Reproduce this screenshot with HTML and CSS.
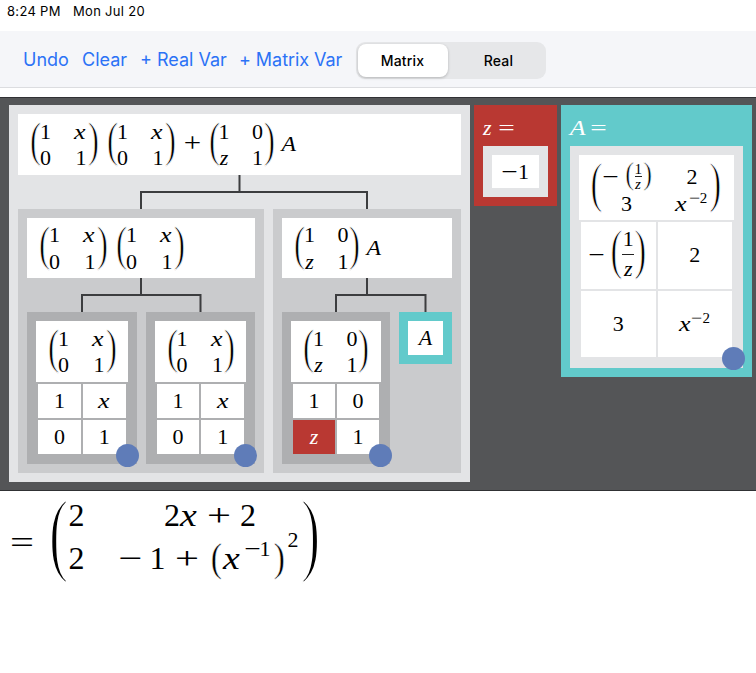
FILE: index.html
```html
<!DOCTYPE html>
<html lang="en">
<head>
<meta charset="utf-8">
<title>Matrix Calculator</title>
<link rel="stylesheet" href="styles.css">
</head>
<body>
<header class="status"><span class="time">8:24 PM</span><span class="date">Mon Jul 20</span></header>
<nav class="toolbar">
  <a class="undo">Undo</a><a class="clear">Clear</a><a class="real">+ Real Var</a><a class="matrix">+ Matrix Var</a>
  <div class="segment"><span class="seg on">Matrix</span><span class="seg">Real</span></div>
</nav>
<main class="canvas">
  <section class="node root">
    <div class="formula">
      <span class="mx"><b class="p">(</b><span class="grid"><i>1</i><i class="v">x</i><i>0</i><i>1</i></span><b class="p">)</b></span>
      <span class="mx next"><b class="p">(</b><span class="grid"><i>1</i><i class="v">x</i><i>0</i><i>1</i></span><b class="p">)</b></span>
      <b class="op plus">+</b>
      <span class="mx"><b class="p">(</b><span class="grid narrow"><i>1</i><i>0</i><i class="v z">z</i><i>1</i></span><b class="p">)</b></span>
      <i class="v cap">A</i>
    </div>
    <svg class="wire" width="443" height="34"><path d="M221.5 0V17M123 34V17H349V34"/></svg>
    <div class="children">
      <section class="node mid left">
        <div class="formula">
          <span class="mx"><b class="p">(</b><span class="grid"><i>1</i><i class="v">x</i><i>0</i><i>1</i></span><b class="p">)</b></span>
          <span class="mx next"><b class="p">(</b><span class="grid"><i>1</i><i class="v">x</i><i>0</i><i>1</i></span><b class="p">)</b></span>
        </div>
        <svg class="wire" width="228" height="34"><path d="M114 0V17M55 34V17H173.500V34"/></svg>
        <div class="children">
          <section class="node leaf">
            <div class="formula"><span class="mx"><b class="p">(</b><span class="grid"><i>1</i><i class="v">x</i><i>0</i><i>1</i></span><b class="p">)</b></span></div>
            <div class="cells"><i>1</i><i><span class="v">x</span></i><i>0</i><i>1</i></div>
            <span class="handle"></span>
          </section>
          <section class="node leaf">
            <div class="formula"><span class="mx"><b class="p">(</b><span class="grid"><i>1</i><i class="v">x</i><i>0</i><i>1</i></span><b class="p">)</b></span></div>
            <div class="cells"><i>1</i><i><span class="v">x</span></i><i>0</i><i>1</i></div>
            <span class="handle"></span>
          </section>
        </div>
      </section>
      <section class="node mid right">
        <div class="formula">
          <span class="mx"><b class="p">(</b><span class="grid narrow"><i>1</i><i>0</i><i class="v z">z</i><i>1</i></span><b class="p">)</b></span>
          <i class="v cap">A</i>
        </div>
        <svg class="wire" width="170" height="34"><path d="M85 0V17M54 34V17H143.500V34"/></svg>
        <div class="children">
          <section class="node leaf slim">
            <div class="formula"><span class="mx"><b class="p">(</b><span class="grid narrow"><i>1</i><i>0</i><i class="v z">z</i><i>1</i></span><b class="p">)</b></span></div>
            <div class="cells"><i>1</i><i>0</i><i class="red"><span class="v z">z</span></i><i>1</i></div>
            <span class="handle"></span>
          </section>
          <div class="ref"><i class="v">A</i></div>
        </div>
      </section>
    </div>
  </section>

  <section class="var zvar">
    <h2><i class="v z">z</i><b class="op">=</b></h2>
    <div class="frame"><div class="value"><b class="op">−</b><i>1</i></div></div>
  </section>

  <section class="var avar">
    <h2><i class="v">A</i><b class="op">=</b></h2>
    <div class="frame">
      <div class="formula">
        <span class="mx tall"><b class="p">(</b><span class="grid wide">
          <span class="entry"><b class="op">−</b><span class="small"><b class="p">(</b><span class="frac"><i>1</i><i class="v z">z</i></span><b class="p">)</b></span></span>
          <i>2</i><i>3</i>
          <span class="pow"><i class="v">x</i><sup><b class="op">−</b><i>2</i></sup></span>
        </span><b class="p">)</b></span>
      </div>
      <div class="cells">
        <div class="fraccell"><b class="op">−</b><span class="mx tall"><b class="p">(</b><span class="frac"><i>1</i><i class="v z">z</i></span><b class="p">)</b></span></div>
        <i>2</i><i>3</i>
        <i><span class="pow"><span class="v">x</span><sup><b class="op">−</b><span>2</span></sup></span></i>
      </div>
      <span class="handle"></span>
    </div>
  </section>
</main>
<footer class="result">
  <b class="op equals">=</b>
  <span class="mx huge"><b class="p">(</b><span class="grid answer">
    <i>2</i>
    <span class="sum"><i>2</i><i class="v x">x</i><b class="op">+</b><i>2</i></span>
    <i>2</i>
    <span class="sum second"><b class="op">−</b><i class="one">1</i><b class="op">+</b><b class="pm">(</b><i class="v x">x</i><sup><b class="op">−</b><i>1</i></sup><b class="pm">)</b><sup class="outer"><i>2</i></sup></span>
  </span><b class="p">)</b></span>
</footer>
</body>
</html>
```
FILE: styles.css
```css
* { box-sizing: border-box; }
body { margin: 0; width: 756px; height: 673px; overflow: hidden; background: #fff; color: #000; font: 22px "Liberation Serif", serif; }
i, b { font-style: normal; font-weight: 400; }
svg { display: block; }

.status { height: 31px; padding: 3px 7px; display: flex; font: 400 13px/16px Inter, sans-serif; letter-spacing: .3px; }
.time { width: 66px; }
.toolbar { height: 57px; background: #f5f6f9; border-bottom: 1px solid #dcdde0; display: flex; align-items: center; padding: 2px 0 0 23px; font: 400 18px/24px Inter, sans-serif; color: #2b72f6; white-space: nowrap; }
.undo { width: 59px; }
.clear { width: 58px; }
.real { width: 99px; }
.matrix { width: 117.500px; letter-spacing: -.05px; }
.segment { width: 190px; height: 37px; margin-left: -1px; border-radius: 9px; background: #e6e7e9; padding: 2px; display: flex; flex: none; font: 500 14px/33px Inter, sans-serif; letter-spacing: .2px; color: #000; text-align: center; }
.seg { width: 102px; flex: none; }
.seg.on { width: 90px; border-radius: 8px; background: #fff; box-shadow: 0 1px 3px rgba(0,0,0,.22); }

.canvas { margin-top: 8.5px; height: 394px; background: #545557; border-top: 1px solid #303134; border-bottom: 1px solid #303134; padding: 7.500px 4px 0 9px; display: flex; align-items: flex-start; }
.node { padding: 9px; }
.root { width: 461px; height: 377px; background: #e3e4e6; }
.children { display: flex; gap: 9px; align-items: flex-start; }
.formula { height: 60.500px; background: #fff; padding-left: 13px; display: flex; align-items: center; }
.wire { fill: none; stroke: #3c3d3f; stroke-width: 2; }
.mid { background: #cacbcd; height: 264px; }
.left { width: 246px; }
.right { width: 188px; }
.leaf { position: relative; width: 109.500px; height: 152px; background: #aeafb1; }
.slim { width: 108px; }
.cells { display: grid; grid-template-columns: 1fr 1fr; gap: 2px; padding: 2px 2px 0; grid-auto-rows: 34px; }
.cells > * { background: #fff; display: flex; align-items: center; justify-content: center; }
.cells > .red { background: #b93832; color: #fff; }
.handle { position: absolute; right: -2px; bottom: -3px; width: 23px; height: 23px; border-radius: 50%; background: #5f7cb8; }
.ref { width: 53px; height: 52px; background: #62cacb; padding: 9px; }
.ref i { background: #fff; height: 34px; display: flex; align-items: center; justify-content: center; transform: none; }

.mx { display: inline-flex; align-items: center; flex: none; }
.next { margin-left: 10.500px; }
.p, .pm { display: block; flex: none; width: 9px; line-height: 22px; text-align: center; transform-origin: 50% 58.8%; transform: translateY(-1.500px) scale(1.5, 2.2); -webkit-text-stroke: .45px #fff; }
.grid { display: grid; grid-template-columns: 11px 12px; column-gap: 24px; line-height: 26.500px; margin: 2px 1.500px 0 0; justify-items: center; }
.grid.narrow { grid-template-columns: 11px 11px; column-gap: 22.500px; }
.v { font-style: italic; display: inline-block; transform: scaleX(1.18); }
.grid .v { transform: translateX(-1px) scaleX(1.18); }
.z, .grid .z { transform: none; }
.cap { margin-left: 8px; transform: scaleX(1.08); }
.op { display: inline-block; width: 15px; text-align: center; transform: scaleX(1.33); flex: none; }
.plus { margin: 0 10px; transform: scale(1.4, 1.2); }

.var { height: 101px; padding: 9px; margin-left: 4px; color: #fff; }
.zvar { width: 83px; background: #b93832; }
.avar { width: 191px; height: 272px; background: #62cacb; }
.var h2 { margin: 0; height: 32px; font: 22px/28px "Liberation Serif", serif; display: flex; gap: 7px; }
.avar h2 { padding-left: 1px; }
.frame { color: #000; background: #e3e4e6; padding: 9px; }
.zvar .frame { height: 51px; }
.value { height: 33px; background: #fff; display: flex; align-items: center; padding-left: 10px; gap: 1px; }
.avar .frame { position: relative; height: 222px; }
.avar .formula { height: 65px; }
.avar .cells { grid-auto-rows: 66.500px; }
.avar .handle { bottom: -2px; }
.tall .p { transform: translateY(-1.500px) scale(1.6, 2.500); }
.grid.wide { grid-template-columns: 48px 33px; column-gap: 25px; grid-template-rows: 27px 26.500px; margin: 6px 2px 0 1.500px; }
.entry, .small, .pow { display: flex; align-items: center; }
.pow { align-items: baseline; }
.small { margin-left: 8px; }
.wide .small .p { width: 7px; transform: translateY(-2px) scale(1.2, 1.450); }
.frac { display: flex; flex-direction: column; align-items: center; justify-content: center; }
.small .frac { width: 11px; font-size: 15px; height: 28px; flex: none; }
.small .frac i { line-height: 12px; height: 14px; width: 7px; text-align: center; }
.small .frac .z { line-height: 15px; }
.small .frac i:first-child, .fraccell .frac i:first-child { border-bottom: 1px solid #222; }
.fraccell .frac { width: 15px; }
.fraccell .frac i { width: 12px; text-align: center; height: 26px; line-height: 19px; }
.fraccell .frac .z { line-height: 27px; }
.fraccell .mx { margin-left: 8px; }
.fraccell .op { margin-left: -3px; }
sup { font-size: 15px; line-height: 0; vertical-align: 8px; display: inline-block; transform: translateY(-8px); margin-left: 2px; }
sup .op { width: 11px; }

.result { height: 100px; padding: 0 0 0 11px; display: flex; align-items: center; font-size: 32px; }
.result .op { width: 22px; }
.equals { margin: 3px 18px 0 0; }
.huge > .p { width: 15px; font-size: 32px; line-height: 32px; transform: translateY(-4px) scale(1.800, 2.900); -webkit-text-stroke: .8px #fff; }
.grid.answer { grid-template-columns: 17px 182px; column-gap: 34px; line-height: 43.500px; margin: -7px 2px 0; }
.sum { display: flex; align-items: baseline; height: 43px; }
.sum .x { width: 17px; margin: 0 1px; text-align: center; }
.sum .op { margin: 0 10px 0 9px; }
.sum.second { margin-left: -3px; }
.second .one { margin-right: 1px; }
.second > .op:first-child { margin: 0 9px 0 0; }
.sum .pm { width: 9px; line-height: 43px; transform: scale(1.050, 1.250); margin-left: 3px; }
.second .x { margin-left: 4px; }
.sum sup { font-size: 22px; transform: translateY(-13px); margin-left: 3px; }
.sum sup .op { width: 15px; margin: 0; }
.sum .outer { transform: translateY(-22px); margin-left: 5px; }
```
